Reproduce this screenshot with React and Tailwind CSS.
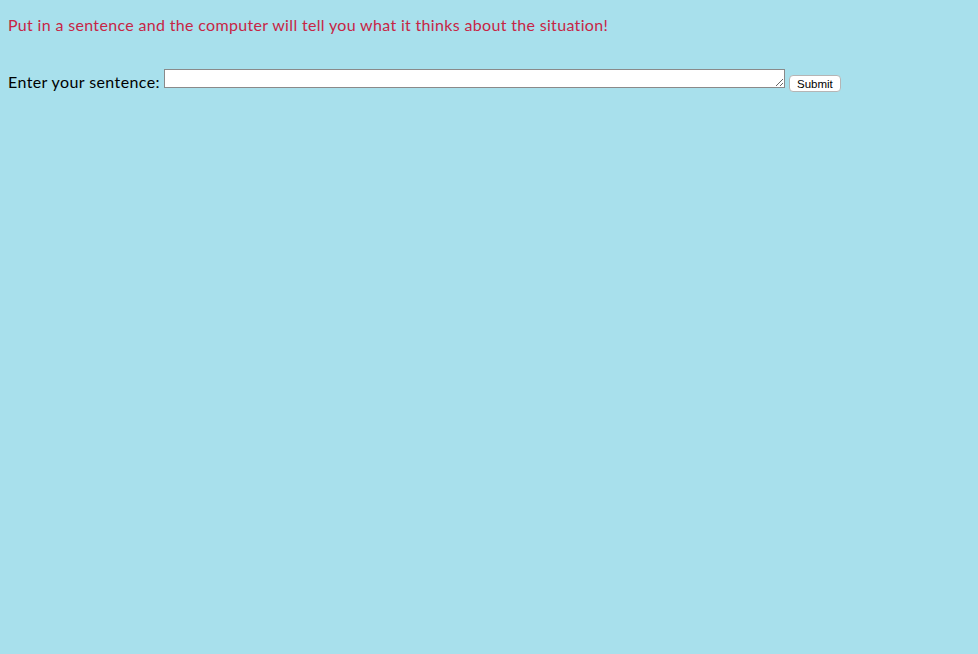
import React from 'react';

export default function App() {
  return (
    <div className="min-h-[654px] w-full bg-[#a8e0ec] px-2 pt-4 font-['Lato',sans-serif] tracking-[0.33px]">
      <p className="text-[16px] leading-[18px] text-[#c72545]">
        Put in a sentence and the computer will tell you what it thinks about the situation!
      </p>
      <form className="mt-[35px] flex items-end" onSubmit={(e) => e.preventDefault()}>
        <label className="mb-[-3px] mr-1 text-[16px] leading-[18px] tracking-[0.4px] text-black">Enter your sentence:</label>
        <textarea
          rows={1}
          className="h-[19px] w-[621px] resize border border-[#8a8a8a] bg-white text-[13px]"
        />
        <button
          type="submit"
          className="mb-[-4px] ml-1 h-[17px] rounded-[4px] border border-[#b5b5b5] bg-white px-[7px] font-['Liberation_Sans',sans-serif] text-[11.5px] leading-[14px] tracking-normal text-black"
        >
          Submit
        </button>
      </form>
    </div>
  );
}
